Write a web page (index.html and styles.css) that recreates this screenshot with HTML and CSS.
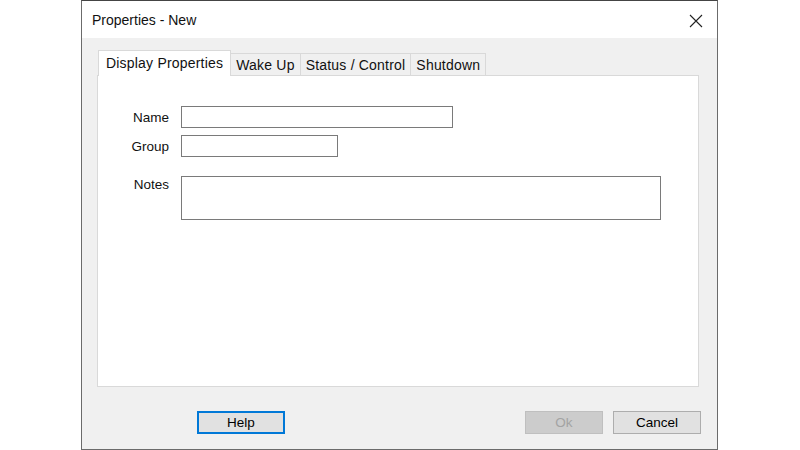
FILE: index.html
```html
<!DOCTYPE html>
<html lang="en">
<head>
    <meta charset="UTF-8">
    <title>Properties - New</title>
    <link rel="stylesheet" href="styles.css">
</head>
<body>
    <div class="dialog">
        <div class="titlebar">
            <span class="title">Properties - New</span>
            <span class="close">
                <svg width="14" height="14" viewBox="0 0 14 14">
                    <path d="M1 1 L13 13 M13 1 L1 13" stroke="#222" stroke-width="1.1" fill="none"/>
                </svg>
            </span>
        </div>

        <div class="client">
            <div class="tabs">
                <div class="tab active">Display Properties</div>
                <div class="tab">Wake Up</div>
                <div class="tab">Status / Control</div>
                <div class="tab">Shutdown</div>
            </div>

            <div class="panel">
                <div class="form">
                    <label class="label">Name</label>
                    <div class="field name-field"></div>
                    <label class="label">Group</label>
                    <div class="field group-field"></div>
                    <label class="label notes-label">Notes</label>
                    <div class="field notes-field"></div>
                </div>
            </div>

            <div class="button-row">
                <button class="button focused">Help</button>
                <button class="button ok" disabled>Ok</button>
                <button class="button">Cancel</button>
            </div>
        </div>
    </div>
</body>
</html>
```

FILE: styles.css
```css
body {
    margin: 0;
    background: #fff;
    font-family: 'Liberation Sans', Arial, sans-serif;
    font-size: 13px;
    color: #000;
}

.dialog {
    display: flex;
    flex-direction: column;
    width: 635px;
    height: 448px;
    margin-left: 81px;
    border: 1px solid #6b6b6b;
    border-top-color: #444;
    background: #f0f0f0;
}

.titlebar {
    display: flex;
    align-items: center;
    justify-content: space-between;
    height: 37px;
    padding: 0 14px 0 10px;
    background: #fff;
}

.title {
    font-size: 14px;
    color: #111;
    margin-top: 1px;
}

.close {
    display: flex;
    margin-top: 2px;
}

.client {
    flex: 1;
    display: flex;
    flex-direction: column;
    padding: 13px 16px 0 15px;
}

.tabs {
    display: flex;
    align-items: flex-end;
    padding-left: 1px;
    height: 24px;
    position: relative;
    z-index: 1;
}

.tab {
    height: 21px;
    line-height: 23px;
    padding: 0 5px;
    border: 1px solid #d9d9d9;
    border-bottom: none;
    background: #f0f0f0;
    color: #111;
    font-size: 14px;
    letter-spacing: 0.2px;
    margin-left: -1px;
}

.tab.active {
    height: 25px;
    line-height: 24px;
    padding: 0 7px;
    background: #fff;
    margin-left: 0;
    margin-bottom: -1px;
}

.panel {
    height: 310px;
    margin-right: 2px;
    background: #fff;
    border: 1px solid #d9d9d9;
}

.form {
    display: grid;
    grid-template-columns: 71px auto;
    column-gap: 12px;
    row-gap: 7px;
    padding-top: 30px;
    justify-items: start;
}

.label {
    justify-self: end;
    align-self: center;
    color: #111;
    font-size: 13.5px;
}

.notes-label {
    align-self: start;
    margin-top: 13px;
}

.field {
    height: 20px;
    border: 1px solid #7a7a7a;
    background: #fff;
}

.name-field {
    width: 270px;
}

.group-field {
    width: 155px;
}

.notes-field {
    width: 478px;
    height: 42px;
    margin-top: 12px;
}

.button-row {
    display: flex;
    margin-top: 24px;
    padding-left: 100px;
}

.button {
    width: 88px;
    height: 23px;
    padding: 0;
    font-family: inherit;
    font-size: 13.5px;
    color: #000;
    background: #e1e1e1;
    border: 1px solid #adadad;
}

.button.focused {
    border: 2px solid #0078d7;
}

.button.ok {
    width: 78px;
    margin-left: auto;
    margin-right: 10px;
    background: #cccccc;
    border-color: #bfbfbf;
    color: #a3a3a3;
}
```
